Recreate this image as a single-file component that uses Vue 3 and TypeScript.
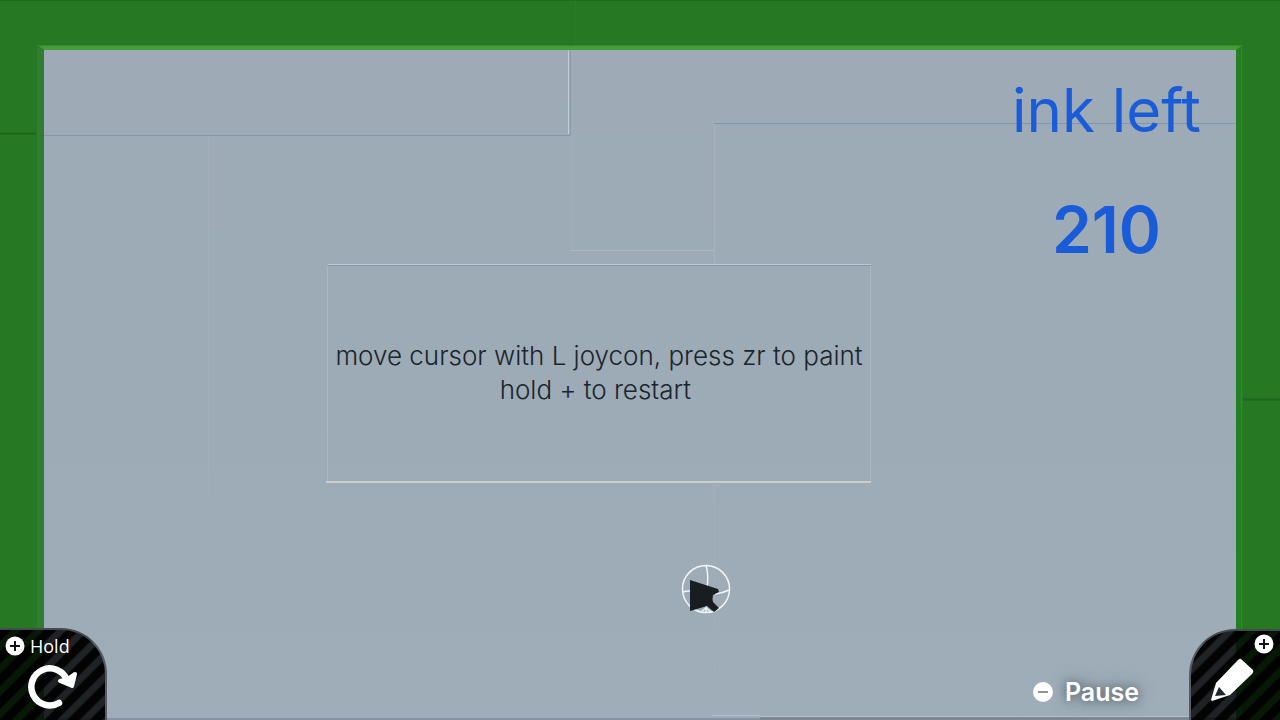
<script setup lang="ts">
import { ref } from 'vue'

const ink = ref(210)
const message: string[] = ['move cursor with L joycon, press zr to paint', 'hold + to restart ']
</script>

<template>
  <main class="stage">
    <svg class="scene" viewBox="0 0 1280 720" preserveAspectRatio="none" aria-hidden="true">
      <defs>
        <linearGradient id="wall" x1="0" y1="0" x2="0" y2="1">
          <stop offset="0" stop-color="#9eabb6" />
          <stop offset="0.5" stop-color="#9dabb6" />
          <stop offset="1" stop-color="#9eadb8" />
        </linearGradient>
      </defs>
      <rect width="1280" height="720" fill="#277823" />
      <rect width="1280" height="1" fill="#1d6a1e" />
      <path d="M0 133.5H36M1243 399.5H1280" stroke="#1d651e" stroke-width="2" />
      <path d="M575.5 0V46" stroke="#2b7a2a" />
      <path d="M37 45H1243L1236 50H44Z" fill="#479c37" />
      <path d="M37 45.5H1243" stroke="#318a2a" />
      <path d="M37 46L44 50V720H37Z" fill="#307c31" />
      <path d="M1243 46L1236 50V720H1243Z" fill="#258024" />
      <path d="M1241.5 47V720" stroke="#36853b" />
      <rect x="44" y="50" width="1192" height="670" fill="url(#wall)" />
      <path d="M44 135.5H570M714 123.5H1236" stroke="#8395ad" />
      <path d="M568.5 51V134" stroke="#c0ccd5" />
      <path d="M570.5 51V135" stroke="#8b9bad" />
      <path d="M208.5 136V500M571.5 136V250M714.5 484V715" stroke="#a2aeb9" />
      <path d="M714.5 124V264" stroke="#a7b3be" />
      <path d="M570 250.5H714" stroke="#adb8c2" />
      <path d="M327.5 266V481M870.5 266V481" stroke="#abb7c1" />
      <path d="M328 264.5H871" stroke="#bcc7d1" />
      <path d="M328 265.5H871" stroke="#8496ac" />
      <path d="M326 482H871" stroke="#c9cdcd" stroke-width="2" />
      <path d="M44 719H760" stroke="#8593a5" stroke-width="2" />
      <path d="M712 715.5H760M760 716.5H1236" stroke="#b5c0ca" />
      <path d="M760 718.5H1236" stroke="#7d8992" stroke-width="3" />
    </svg>

    <section class="counter" aria-label="Ink">
      <h1 class="ink-label">ink left</h1>
      <output class="ink-value">{{ ink }}</output>
    </section>

    <section class="sign">
      <p v-for="line in message" :key="line" class="line">{{ line }}</p>
    </section>

    <svg class="cursor" viewBox="0 0 50 50" aria-hidden="true">
      <g fill="none" stroke="#f2f6f8" stroke-width="1.5">
        <circle cx="25" cy="25" r="23.5" />
        <path d="M25 1Q28 12 26 24M2 28Q8 26 14 28M34 30Q42 29 48 26M25 40V49M21 47L25 44L30 48" />
      </g>
      <path d="M9 16L37 25L38 28L32 31Q31 35 32 38L38 44L33 48L26 42L16 45L9 47Z" fill="#181d20" />
    </svg>

    <footer class="controls">
      <button class="corner restart" type="button">
        <span class="hint">
          <svg class="badge" viewBox="0 0 20 20" aria-hidden="true">
            <circle cx="10" cy="10" r="9.5" fill="#fff" />
            <path d="M10 5V15M5 10H15" stroke="#111" stroke-width="2" />
          </svg>
          Hold
        </span>
        <svg class="reload" viewBox="0 0 52 46" aria-hidden="true">
          <path d="M32 40A18.5 18.5 0 1 1 40 17" fill="none" stroke="#fff" stroke-width="6.5" stroke-linecap="round" />
          <path d="M33 18L41 16L48 11L45 23Z" fill="#fff" stroke="#fff" stroke-width="4" stroke-linejoin="round" />
        </svg>
      </button>
      <button class="pause" type="button">
        <svg class="badge" viewBox="0 0 20 20" aria-hidden="true">
          <circle cx="10" cy="10" r="10" fill="#fff" />
          <path d="M5 10H15" stroke="#6b747a" stroke-width="1.5" />
        </svg>
        Pause
      </button>
      <button class="corner draw" type="button" aria-label="Draw">
        <svg class="badge" viewBox="0 0 20 20" aria-hidden="true">
          <circle cx="10" cy="10" r="9.5" fill="#fff" />
          <path d="M10 5V15M5 10H15" stroke="#111" stroke-width="2" />
        </svg>
        <svg class="pencil" viewBox="0 0 44 44" aria-hidden="true">
          <path d="M31 1L43 12Q44 14 42 16L20 37L2 43L1 42L6 25L28 2Q30 0 31 1Z" fill="#fff" />
          <path d="M9 29L16 37L5 38Z" fill="#20272a" />
        </svg>
      </button>
    </footer>
  </main>
</template>

<style>
body {
  margin: 0;
}
</style>

<style scoped>
.stage {
  position: relative;
  box-sizing: border-box;
  min-height: 100vh;
  display: grid;
  grid-template-rows: 264px 1fr auto;
  overflow: hidden;
  font-family: Inter, "Liberation Sans", sans-serif;
}
.scene {
  position: absolute;
  inset: 0;
  width: 100%;
  height: 100%;
}
.counter {
  position: relative;
  justify-self: end;
  display: flex;
  flex-direction: column;
  align-items: center;
  padding: 70px 79px 0 0;
  color: #1a5cd8;
}
.ink-label {
  margin: 0;
  font-size: 60px;
  line-height: 80px;
  font-weight: 400;
}
.ink-value {
  margin-top: 40px;
  font-size: 64px;
  line-height: 80px;
  font-weight: 600;
}
.sign {
  position: relative;
  display: flex;
  flex-direction: column;
  align-items: center;
  padding: 75px 82px 0 0;
  color: #1a252c;
}
.line {
  margin: 0;
  font-size: 26px;
  line-height: 34px;
  font-weight: 300;
  white-space: pre;
}
.cursor {
  position: absolute;
  left: 681px;
  top: 564px;
  width: 50px;
  height: 50px;
}
.controls {
  position: relative;
  display: flex;
  align-items: flex-end;
}
button {
  margin: 0;
  padding: 0;
  border: 0;
  color: #fff;
  font-family: inherit;
}
.badge {
  display: block;
  width: 20px;
  height: 20px;
}
.corner {
  box-sizing: border-box;
  display: flex;
  flex-direction: column;
  background: repeating-linear-gradient(135deg, rgba(0, 0, 0, 0.98) 0 7px, rgba(0, 0, 0, 0.8) 9px 14px, rgba(0, 0, 0, 0.98) 16px);
  border-top: 2px solid #444b50;
}
.restart {
  width: 107px;
  height: 92px;
  border-right: 2px solid #555d63;
  border-top-right-radius: 46px;
  padding: 6px 0 0 5px;
}
.hint {
  display: flex;
  align-items: center;
  gap: 5px;
  font-family: "Open Sans", "Noto Sans", sans-serif;
  font-size: 18px;
  line-height: 20px;
}
.reload {
  width: 52px;
  height: 46px;
  margin: 7px 0 0 22px;
}
.pause {
  margin: 0 50px 14px auto;
  display: flex;
  align-items: center;
  gap: 12px;
  background: transparent;
  font-size: 25px;
  line-height: 28px;
  font-weight: 600;
  text-shadow: 0 0 8px #59656d, 0 0 16px #6d7a83;
}
.draw {
  width: 91px;
  height: 91px;
  border-left: 2px solid #555d63;
  border-top-left-radius: 46px;
  padding: 3px 6px 0 0;
  align-items: flex-end;
}
.pencil {
  width: 44px;
  height: 44px;
  margin: 4px 20px 0 0;
}
</style>
